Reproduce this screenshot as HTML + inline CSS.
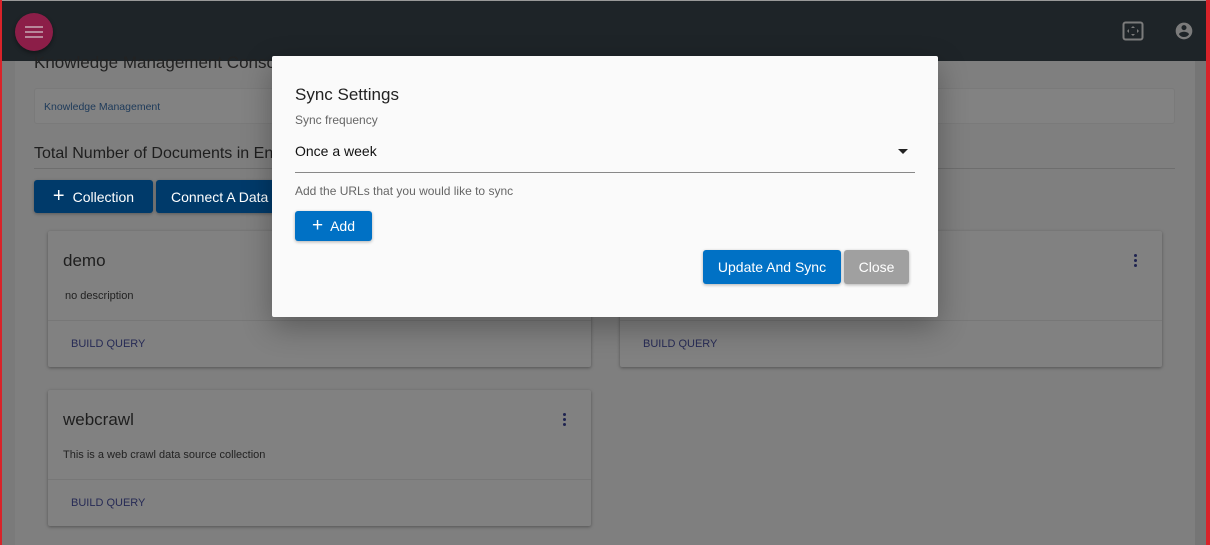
<!DOCTYPE html>
<html><head><style>
*{box-sizing:border-box;margin:0;padding:0}
body{width:1210px;height:545px;overflow:hidden;background:#7f7f7f;font-family:"Liberation Sans",sans-serif;position:relative}
.a{position:absolute}
.card{position:absolute;background:#818181;box-shadow:0 1px 3px rgba(0,0,0,.35);border-radius:2px}
.card .t{position:absolute;left:15px;top:20px;font-size:17px;color:#1e1e1e}
.card .d{position:absolute;left:17px;top:59px;font-size:11px;color:#222}
.card .hr{position:absolute;left:0;right:0;top:89px;height:1px;background:#777}
.card .b{position:absolute;left:23px;top:107px;font-size:11px;color:#262a55}
.dots{position:absolute;width:4px}
.dots i{display:block;width:3px;height:3px;border-radius:50%;background:#1f2450;margin-bottom:2px}
.btn{position:absolute;color:#fff;font-size:14px;border-radius:3px;display:flex;align-items:center;justify-content:center;box-shadow:0 1px 3px rgba(0,0,0,.3)}
</style></head><body>
<div class="a" style="left:0;top:0;width:1210px;height:1px;background:#999"></div>
<div class="a" style="left:0;top:1px;width:1210px;height:60px;background:#1e2428"></div>
<div class="a" style="left:15px;top:13px;width:38px;height:38px;border-radius:50%;background:#8c1e48;box-shadow:0 2px 4px rgba(0,0,0,.4)"></div>
<div class="a" style="left:25px;top:26px;width:18px;height:2px;background:#b8879a;box-shadow:0 5px 0 #b8879a,0 10px 0 #b8879a"></div>
<svg class="a" style="left:1122px;top:21px" width="22" height="20" viewBox="0 0 22 20"><rect x="1.5" y="1.5" width="19" height="17" rx="2" fill="none" stroke="#7b7b7b" stroke-width="2"/><path d="M11 5l-2 2h4zM11 15l-2-2h4zM5 10l2-2v4zM17 10l-2-2v4z" fill="#7b7b7b"/></svg>
<svg class="a" style="left:1174px;top:21px" width="20" height="20" viewBox="0 0 24 24"><path fill="#7b7b7b" d="M12 2C6.48 2 2 6.48 2 12s4.48 10 10 10 10-4.48 10-10S17.52 2 12 2zm0 3c1.66 0 3 1.34 3 3s-1.34 3-3 3-3-1.34-3-3 1.34-3 3-3zm0 14.2c-2.5 0-4.710-1.28-6-3.220.03-1.99 4-3.08 6-3.08 1.99 0 5.97 1.09 6 3.08-1.29 1.94-3.5 3.22-6 3.22z"/></svg>
<div class="a" style="left:1195px;top:61px;width:11px;height:484px;background:#757575"></div>
<div class="a" style="left:0;top:0;width:2px;height:545px;background:#d8232a"></div>
<div class="a" style="left:1206px;top:0;width:4px;height:545px;background:#d8232a"></div>
<div class="a" style="left:2px;top:61px;width:13px;height:484px;background:#7a7a7a"></div>

<div class="a" style="left:34px;top:53px;font-size:17px;color:#222">Knowledge Management Console</div>
<div class="a" style="left:34px;top:88px;width:1141px;height:36px;background:#828282;border:1px solid #7a7a7a;border-radius:3px"></div>
<div class="a" style="left:44px;top:101px;font-size:10.5px;color:#1d3a5a">Knowledge Management</div>
<div class="a" style="left:34px;top:145px;font-size:16px;color:#1e1e1e">Total Number of Documents in Enterprise Search</div>
<div class="a" style="left:34px;top:168px;width:1141px;height:1px;background:#6e6e6e"></div>
<div class="btn" style="left:34px;top:180px;width:119px;height:33px;background:#003a6a"><span style="font-size:20px;margin-right:8px;font-weight:300">+</span>Collection</div>
<div class="btn" style="left:156px;top:180px;width:140px;height:33px;background:#003a6a;justify-content:flex-start;padding-left:15px">Connect A Data</div>

<div class="card" style="left:48px;top:231px;width:543px;height:136px"><div class="t">demo</div><div class="d">no description</div><div class="hr"></div><div class="b">BUILD QUERY</div></div>
<div class="card" style="left:620px;top:231px;width:542px;height:136px"><div class="hr"></div><div class="b">BUILD QUERY</div><div class="dots" style="left:514px;top:23px"><i></i><i></i><i></i></div></div>
<div class="card" style="left:48px;top:390px;width:543px;height:136px"><div class="t">webcrawl</div><div class="d" style="left:15px">This is a web crawl data source collection</div><div class="hr"></div><div class="b">BUILD QUERY</div><div class="dots" style="left:515px;top:23px"><i></i><i></i><i></i></div></div>

<div class="a" style="left:272px;top:56px;width:666px;height:261px;background:#fafafa;box-shadow:0 10px 30px rgba(0,0,0,.3);border-radius:2px">
<div class="a" style="left:23px;top:29px;font-size:17px;color:#222">Sync Settings</div>
<div class="a" style="left:23px;top:57px;font-size:12px;color:#666">Sync frequency</div>
<div class="a" style="left:23px;top:87px;font-size:14px;color:#111">Once a week</div>
<svg class="a" style="left:626px;top:93px" width="10" height="5"><path d="M0 0h10L5 5z" fill="#222"/></svg>
<div class="a" style="left:23px;top:116px;width:620px;height:1px;background:#888"></div>
<div class="a" style="left:23px;top:128px;font-size:12px;color:#666">Add the URLs that you would like to sync</div>
<div class="btn" style="left:23px;top:155px;width:77px;height:30px;background:#0071c5"><span style="font-size:19px;margin-right:7px">+</span>Add</div>
<div class="btn" style="left:431px;top:194px;width:138px;height:34px;background:#0071c5">Update And Sync</div>
<div class="btn" style="left:572px;top:194px;width:65px;height:34px;background:#a0a0a0">Close</div>
</div>
</body></html>
